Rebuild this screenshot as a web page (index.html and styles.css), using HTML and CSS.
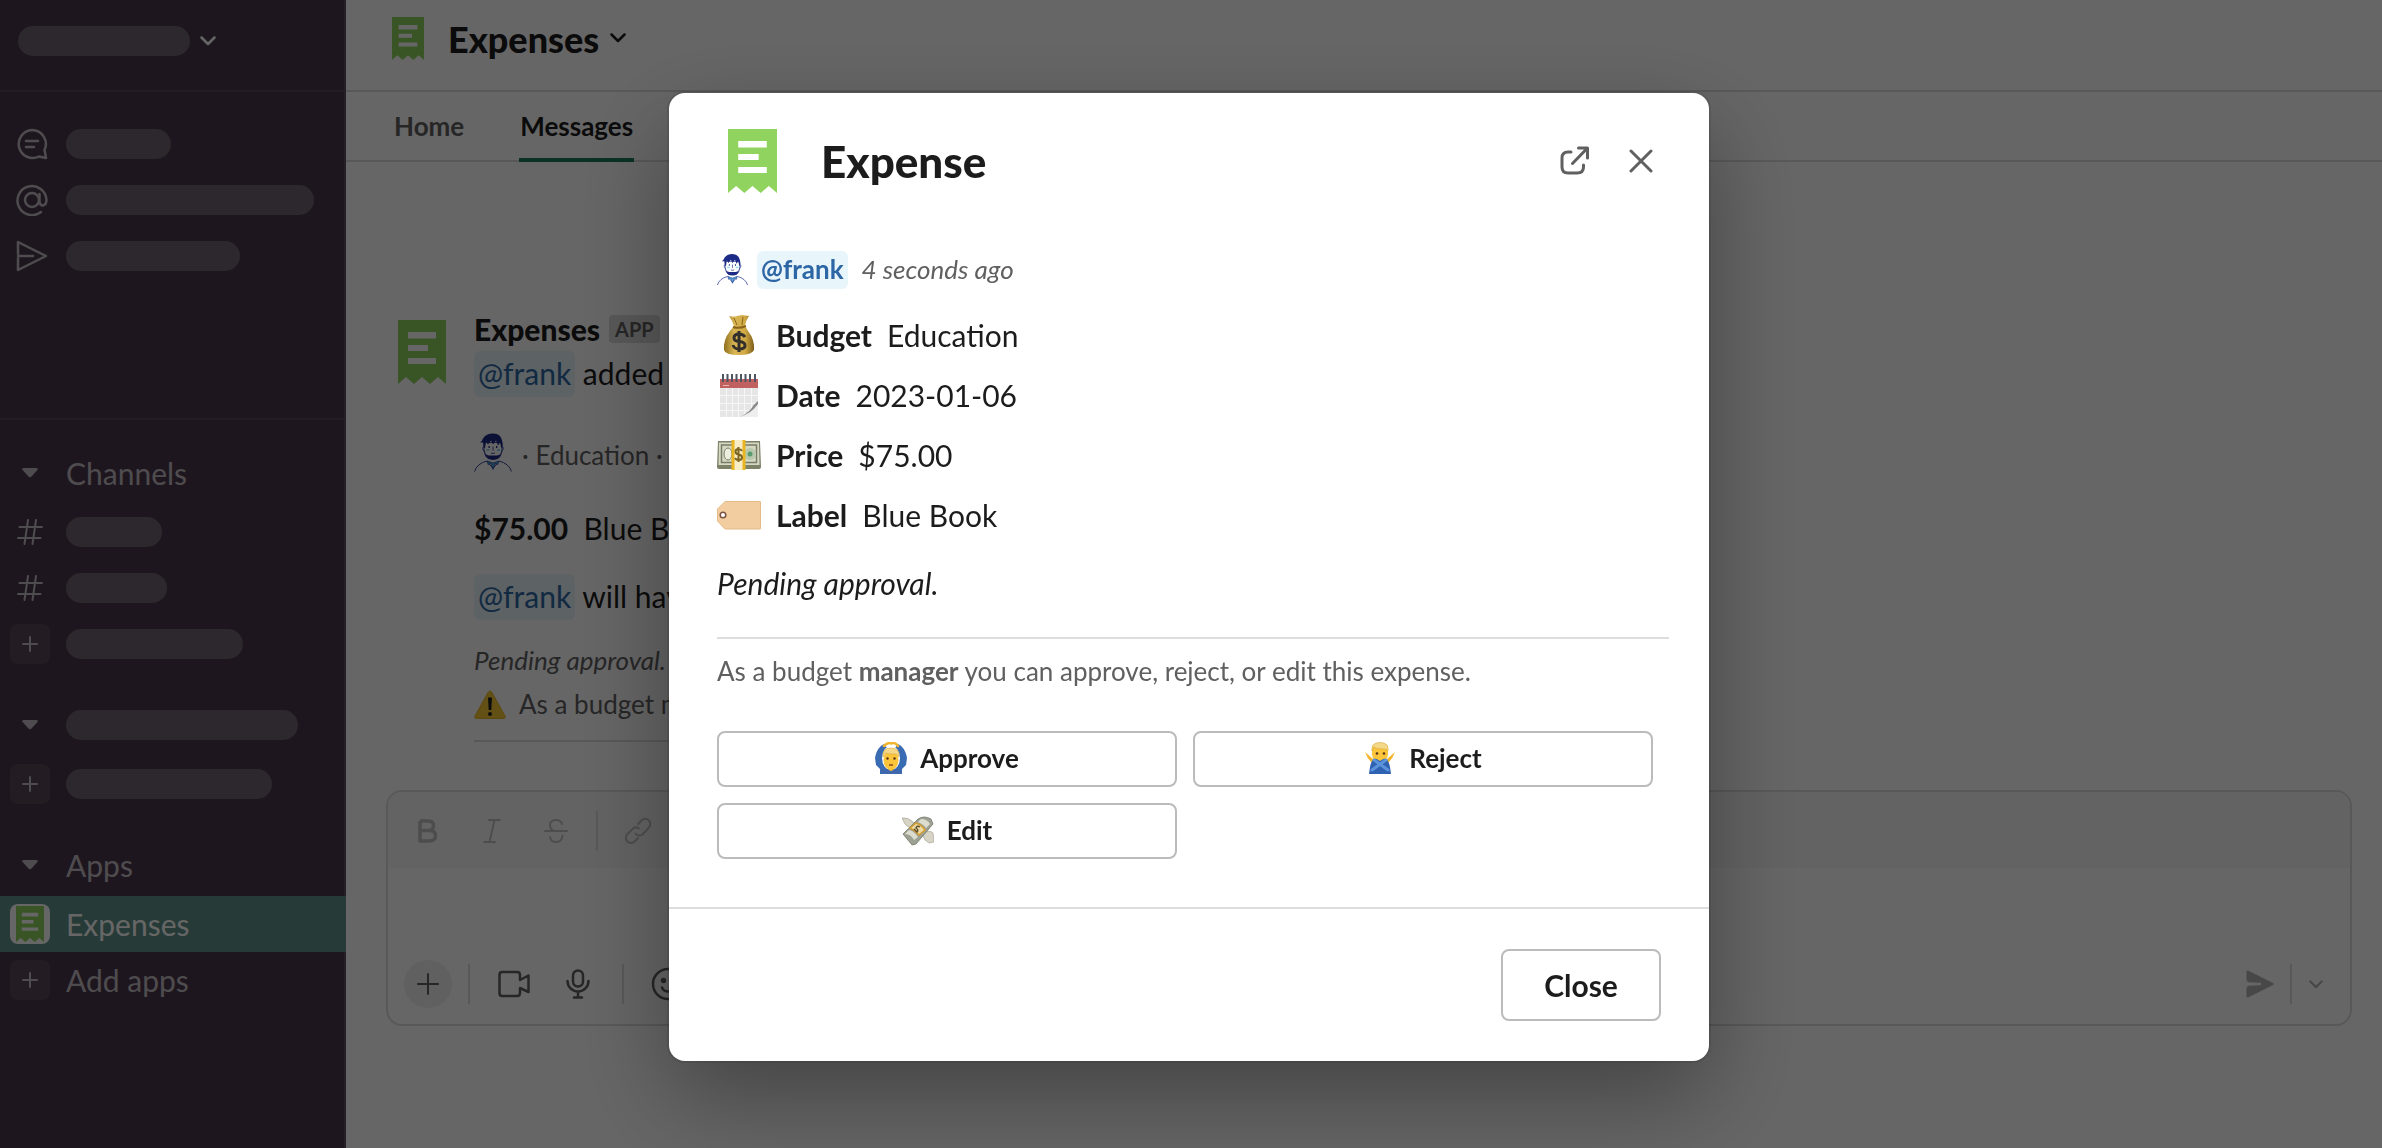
FILE: index.html
```html
<!DOCTYPE html>
<html lang="en">
<head>
<meta charset="utf-8">
<title>Expenses</title>
<link rel="stylesheet" href="styles.css">
</head>
<body>
<svg class="defs" aria-hidden="true">
  <symbol id="receipt" viewBox="0 0 48 64" preserveAspectRatio="none">
    <path fill="#90d45f" d="M0 0H48V64L40 57L32 64L24 57L16 64L8 57L0 64Z"/>
    <path fill="#fff" d="M10 12H38V18.5H10ZM10 25H30V31H10ZM10 38H38V44H10Z"/>
  </symbol>
  <symbol id="avatar" viewBox="0 0 38 38">
    <g fill="none" stroke="#3d4a9c" stroke-width="1">
      <path fill="#fff" d="M10 9Q9 22 14 25H24Q29 22 28 9Z"/>
      <path d="M10 13Q7 14 11 19M28 13Q31 14 27 19"/>
      <path fill="#fff" d="M.5 38Q3 30 13 27.5L19 35L25 27.5Q35 30 37.5 38"/>
    </g>
    <path fill="#1d2b86" d="M6 9Q8 8 9 5Q12 0 19 0Q29 0 28.500 13L27.500 15L26 9L24 12L22 7L19 11L17 7L14 11L12 8L11 15L10 14L9 9Z"/>
    <path fill="#1d2b86" d="M11 19.500Q13 22.500 16 22H22Q25 22.500 27 19.500Q26 26.500 19 26.500Q12 26.500 11 19.500Z"/>
    <path fill="#1d2b86" d="M14.500 12.500h1.300v2h-1.300zM22 12.500h1.300v2h-1.300z"/>
    <path fill="none" stroke="#1d2b86" stroke-width=".8" d="M19 13V17M17 19.500Q19 20.500 21 19.500"/>
    <path fill="#8fdcf5" d="M12.500 15.500h3v2h-3zM23 15.500h3v2h-3z"/>
    <path fill="#4aa8dd" stroke="#1d2b86" stroke-width=".6" d="M13.500 27.500L19 29.500L24.500 27.500L24 31L21 30L19 36L17 30L14 31Z"/>
  </symbol>
  <symbol id="chevron" viewBox="0 0 16 10">
    <path fill="none" stroke="currentColor" stroke-width="2.500" stroke-linecap="round" stroke-linejoin="round" d="M1.500 1.500L8 8L14.500 1.500"/>
  </symbol>
  <symbol id="caret" viewBox="0 0 16 10"><path fill="currentColor" d="M1.500 0H14.500Q17 .5 15 2.500L9.500 8.500Q8 10 6.500 8.500L1 2.500Q-1 .5 1.500 0Z"/></symbol>
  <symbol id="hash" viewBox="0 0 26 26"><path fill="none" stroke="currentColor" stroke-width="2" stroke-linecap="round" d="M11 1L7.500 25M19 1L15.500 25M2.500 8H25M1 19H23.500"/></symbol>
  <symbol id="plus" viewBox="0 0 16 16"><path fill="none" stroke="currentColor" stroke-width="2" stroke-linecap="round" d="M8 1V15M1 8H15"/></symbol>
</svg>

<div class="app">
  <nav class="sidebar">
    <div class="workspace">
      <span class="pill" style="width:172px"></span>
      <svg class="chev"><use href="#chevron"/></svg>
    </div>
    <div class="shortcuts">
      <div class="shortcut">
        <svg width="32" height="32" viewBox="0 0 32 32" fill="none" stroke="currentColor" stroke-width="2.500" stroke-linecap="round" stroke-linejoin="round"><path d="M16 2A14 14 0 1 0 23 28.500L30 30L28.500 22A14 14 0 0 0 16 2ZM10 13H22M10 19H18"/></svg>
        <span class="pill" style="width:105px"></span>
      </div>
      <div class="shortcut">
        <svg width="32" height="32" viewBox="0 0 32 32" fill="none" stroke="currentColor" stroke-width="2.500" stroke-linecap="round"><circle cx="16" cy="16" r="7"/><path d="M23.500 10V18Q24 21.500 27 21.500Q30.500 20.500 30.500 16A14.500 14.500 0 1 0 25 28"/></svg>
        <span class="pill" style="width:248px"></span>
      </div>
      <div class="shortcut">
        <svg width="32" height="32" viewBox="0 0 32 32" fill="none" stroke="currentColor" stroke-width="2.500" stroke-linecap="round" stroke-linejoin="round"><path d="M2 16H17M2 14V2L30 16L2 30V18"/></svg>
        <span class="pill" style="width:174px"></span>
      </div>
    </div>
    <div class="sections">
      <section>
        <h2 class="side-head"><svg class="caret"><use href="#caret"/></svg>Channels</h2>
        <div class="side-row"><svg class="hash"><use href="#hash"/></svg><span class="pill" style="width:96px"></span></div>
        <div class="side-row"><svg class="hash"><use href="#hash"/></svg><span class="pill" style="width:101px"></span></div>
        <div class="side-row"><span class="add"><svg width="16" height="16"><use href="#plus"/></svg></span><span class="pill" style="width:177px"></span></div>
      </section>
      <section>
        <div class="side-head"><svg class="caret"><use href="#caret"/></svg><span class="pill" style="width:232px"></span></div>
        <div class="side-row"><span class="add"><svg width="16" height="16"><use href="#plus"/></svg></span><span class="pill" style="width:206px"></span></div>
      </section>
      <section>
        <h2 class="side-head"><svg class="caret"><use href="#caret"/></svg>Apps</h2>
        <a class="side-row active" href="#expenses"><span class="add app-icon"><svg width="28" height="36"><use href="#receipt"/></svg></span>Expenses</a>
        <a class="side-row" href="#add"><span class="add"><svg width="16" height="16"><use href="#plus"/></svg></span>Add apps</a>
      </section>
    </div>
  </nav>

  <main class="main">
    <header class="channel">
      <svg width="32" height="43"><use href="#receipt"/></svg>
      <h1>Expenses</h1>
      <svg class="chev"><use href="#chevron"/></svg>
    </header>
    <div class="tabs">
      <a href="#home">Home</a>
      <a class="current" href="#messages">Messages</a>
    </div>
    <div class="messages">
      <article class="message">
        <div class="message-icon"><svg width="48" height="64"><use href="#receipt"/></svg></div>
        <div class="message-body">
          <div class="sender"><b>Expenses</b><span class="badge">APP</span></div>
          <p class="line first"><a class="mention" href="#frank">@frank</a> added</p>
          <p class="context meta"><svg width="38" height="39"><use href="#avatar"/></svg><span>· Education ·</span></p>
          <p class="line price"><b>$75.00</b>&nbsp; Blue Book</p>
          <p class="line decision"><a class="mention" href="#frank">@frank</a> will have</p>
          <p class="context pending"><i>Pending approval.</i></p>
          <p class="context warning">
            <svg width="32" height="29" viewBox="0 0 32 29"><path fill="#f7c832" stroke="#e9b528" stroke-width="1" stroke-linejoin="round" d="M16 1Q17 1 18 2.500L31 26Q32 28.500 29.500 28.500H2.500Q0 28.500 1 26L14 2.500Q15 1 16 1Z"/><path fill="#222" d="M14 7.500H18L17.300 20H14.700Z"/><circle cx="16" cy="24" r="2" fill="#222"/></svg>
            <span>As a budget manager</span>
          </p>
          <hr>
        </div>
      </article>
    </div>

    <form class="composer">
      <div class="toolbar">
        <button type="button" aria-label="Bold"><svg width="24" height="28" viewBox="0 0 24 28" fill="none" stroke="currentColor" stroke-width="3.500" stroke-linejoin="round"><path d="M4 4V24H13Q19.500 24 19.500 19Q19.500 13.500 13 13.500H4M4 4H12Q17.500 4 17.500 8.500Q17.500 13.500 12 13.500"/></svg></button>
        <button type="button" aria-label="Italic"><svg width="24" height="28" viewBox="0 0 24 28" fill="none" stroke="currentColor" stroke-width="2" stroke-linecap="round"><path d="M9 3H20M4 25H15M14.500 3L9.500 25"/></svg></button>
        <button type="button" aria-label="Strikethrough"><svg width="24" height="28" viewBox="0 0 24 28" fill="none" stroke="currentColor" stroke-width="2" stroke-linecap="round"><path d="M1 14H23M18 7Q17 3 12 3Q6 3 6 8.500Q6 12 10 14M6 20Q7 25 12 25Q18 25 18.500 18.500"/></svg></button>
        <span class="sep"></span>
        <button type="button" aria-label="Link"><svg width="28" height="28" viewBox="0 0 28 28" fill="none" stroke="currentColor" stroke-width="2" stroke-linecap="round"><path d="M14 7L17.500 3.500A5 5 0 0 1 25 10.500L19 17A5 5 0 0 1 11.500 16.500M15 11.500A5 5 0 0 0 9 11.500L3.500 17A5 5 0 0 0 10.500 24.500L14 21"/></svg></button>
      </div>
      <textarea aria-label="Message"></textarea>
      <div class="actions">
        <button type="button" class="round" aria-label="Attach"><svg width="24" height="24" viewBox="0 0 24 24" fill="none" stroke="currentColor" stroke-width="2" stroke-linecap="round"><path d="M12 2V22M2 12H22"/></svg></button>
        <span class="sep"></span>
        <div class="group">
          <button type="button" aria-label="Video"><svg width="32" height="28" viewBox="0 0 32 28" fill="none" stroke="currentColor" stroke-width="2.500" stroke-linejoin="round"><path d="M4 2H19Q22 2 22 5V10L30.500 5.500V22L22 18V23Q22 26 19 26H4Q1.500 26 1.500 23V5Q1.500 2 4 2Z"/></svg></button>
          <button type="button" aria-label="Audio"><svg width="24" height="30" viewBox="0 0 24 30" fill="none" stroke="currentColor" stroke-width="2.500" stroke-linecap="round"><rect x="7" y="1.500" width="10" height="16" rx="5"/><path d="M1.500 12A10.500 10.500 0 0 0 22.500 12M12 22.500V28M8 28.500H16"/></svg></button>
        </div>
        <span class="sep"></span>
        <div class="group">
          <button type="button" aria-label="Emoji"><svg width="34" height="34" viewBox="0 0 34 34" fill="none" stroke="currentColor" stroke-width="2.500" stroke-linecap="round"><circle cx="17" cy="17" r="15"/><path d="M11 20.500A6.500 6.500 0 0 0 23 20.500"/><circle cx="12.500" cy="13.500" r="1.500" fill="currentColor"/><circle cx="21.500" cy="13.500" r="1.500" fill="currentColor"/></svg></button>
        </div>
        <div class="send">
          <button type="submit" aria-label="Send"><svg width="28" height="28" viewBox="0 0 28 28"><path fill="currentColor" d="M.5 1.500Q.8 0 2.500 .8L27 13Q28.500 14 27 15L2.500 27.300Q.8 28 .5 26.500V18Q.8 16 3 15.800L14.500 15.200Q16 14 14.500 12.800L3 12.200Q.8 12 .5 10Z"/></svg></button>
          <span class="sep"></span>
          <button type="button" class="more" aria-label="Send options"><svg width="14" height="9"><use href="#chevron"/></svg></button>
        </div>
      </div>
    </form>
  </main>
</div>

<div class="overlay">
  <div class="modal" role="dialog" aria-modal="true" aria-labelledby="modal-title">
    <header class="modal-head">
      <svg width="49" height="64"><use href="#receipt"/></svg>
      <h2 id="modal-title">Expense</h2>
      <button type="button" class="icon-btn" aria-label="Open in new window"><svg width="30" height="30" viewBox="0 0 30 30" fill="none" stroke="currentColor" stroke-width="3" stroke-linecap="round" stroke-linejoin="round"><path d="M11 6H8Q2 6 2 12V21Q2 27 8 27H17Q23.500 27 23.500 21V19M12.500 17.500L27 2.500M18.500 2H27.500V12"/></svg></button>
      <button type="button" class="icon-btn" aria-label="Dismiss"><svg width="24" height="24" viewBox="0 0 24 24" fill="none" stroke="currentColor" stroke-width="3" stroke-linecap="round"><path d="M2 2L22 22M22 2L2 22"/></svg></button>
    </header>

    <div class="modal-body">
      <p class="author">
        <svg width="31" height="31"><use href="#avatar"/></svg>
        <a class="mention strong" href="#frank">@frank</a>
        <i>4 seconds ago</i>
      </p>
      <ul class="fields">
        <li>
          <svg width="44" height="44" viewBox="0 0 44 44"><defs><linearGradient id="bag"><stop offset="0" stop-color="#8f6d1c"/><stop offset=".35" stop-color="#d9b654"/><stop offset=".7" stop-color="#d0aa45"/><stop offset="1" stop-color="#7d5c16"/></linearGradient></defs><path fill="url(#bag)" d="M12 3Q15 4 20 3L25 2L32 3Q29 7 28 13L31 18Q38 27 37 37Q35 42 22 42Q8 42 7 37Q6 27 13 18L17 13Q15 7 12 3Z"/><path fill="none" stroke="#8a641b" stroke-width="2" d="M16 14Q22 16 29 13"/><path fill="none" stroke="#8a641b" d="M17 5L20 12M26 4L25 12"/><path fill="none" stroke="#34302a" stroke-width="3" d="M22 18V39M28 24Q26 21 22 21Q17 21 17 25Q17 28 22 28.500Q28 29 28 32.500Q28 36 22 36Q17 36 16 32"/></svg>
          <b>Budget</b>Education
        </li>
        <li>
          <svg width="44" height="44" viewBox="0 0 44 44"><path fill="#e6e6e7" d="M3 14H41V44H3Z"/><path fill="#c0605f" d="M3 6H41V15H3Z"/><path stroke="#f6f6f6" d="M3 22.500H41M3 30.500H41M3 37.500H41M9.500 15V44M15.500 15V44M21.500 15V44M27.500 15V44M34.500 15V44"/><path fill="#eee" d="M41 29Q35 39 22 44H41Z"/><path fill="#8a8a8a" d="M41 28Q36 32 34 36Q30 41 22 44Q34 41 41 31Z"/><path stroke="#4b5563" stroke-width="2" d="M6 1V9M10.500 1V9M15 1V9M19.500 1V9M24 1V9M28.500 1V9M33 1V9M38 1V9"/><path stroke="#e8b5b5" d="M6 12.500H12"/></svg>
          <b>Date</b>2023-01-06
        </li>
        <li>
          <svg width="44" height="44" viewBox="0 0 44 44"><path fill="#7d8168" d="M1 8H43L44 34Q44 36 42 36H2Q0 36 0 34Z"/><path fill="#d5d7c0" d="M2 9.500H42L42.500 32H1.500Z"/><path fill="none" stroke="#777c68" stroke-width="1.500" d="M4.500 12H39.500V29.500H4.500Z"/><ellipse cx="11" cy="21" rx="4" ry="6" fill="#eceddd" stroke="#777c68"/><circle cx="33" cy="21" r="6" fill="#b8c8ac"/><circle cx="33" cy="21" r="2.500" fill="#5b9a6e"/><path fill="#f7edc6" d="M15 7H28V37H15Z"/><path fill="#e9b521" d="M14.500 7H17.500V37H14.500ZM25.500 7H28.500V37H25.500Z"/><path fill="none" stroke="#7c6320" stroke-width="2" d="M21.500 14V29M25 18Q24 16 21.500 16Q18.500 16 18.500 18.500Q18.500 21 21.500 21.500Q25 22 25 24.500Q25 27 21.500 27Q19 27 18 25"/></svg>
          <b>Price</b>$75.00
        </li>
        <li>
          <svg width="44" height="44" viewBox="0 0 44 44"><path fill="#f1cda0" stroke="#e3bb87" d="M8 8.500H43Q43.500 8.500 43.500 9V35.500Q43.500 36 43 36H8L.5 28V16Z"/><circle cx="6" cy="22" r="2.800" fill="#fff" stroke="#7b5340" stroke-width="1.500"/></svg>
          <b>Label</b>Blue Book
        </li>
      </ul>
      <p class="status"><i>Pending approval.</i></p>
      <hr>
      <p class="note">As a budget <b>manager</b> you can approve, reject, or edit this expense.</p>
      <div class="choices">
        <button type="button">
          <svg width="32" height="32" viewBox="0 0 32 32"><path fill="#3a6cb4" d="M9 2Q2 5 0 16L1 23L5 27V32H27V27L31 23L32 16Q30 5 23 2L20 6H12Z"/><path fill="none" stroke="#f0b52d" stroke-width="2.500" stroke-linecap="round" d="M9 4Q13 0 16 1.500Q20 0 23 4"/><ellipse cx="16" cy="16" rx="9" ry="12" fill="#fff"/><path fill="#f5b52f" d="M13 25H19V30H13Z"/><path fill="#3f68ac" d="M6 27Q10 27 13 27Q16 31 19 27Q22 27 26 27V32H6Z"/><ellipse cx="16" cy="18" rx="7.500" ry="10" fill="#fbc53b"/><path fill="#f3d88a" stroke="#d9a738" stroke-width=".6" d="M8 15Q7 6 16 6Q25 6 24 15Q23 12 20 12Q12 12 10 11Q9 13 8 15Z"/><circle cx="12.500" cy="16.500" r="1.200" fill="#54331b"/><circle cx="19.500" cy="16.500" r="1.200" fill="#54331b"/><path stroke="#8a4a20" stroke-width="1.500" d="M14 23H18"/></svg>
          Approve
        </button>
        <button type="button">
          <svg width="32" height="32" viewBox="0 0 32 32"><path fill="#f4b62e" d="M1 10L9 17L13 19L10 22L7 20Q3 16 1 10ZM31 10L23 17L19 19L22 22L25 20Q29 16 31 10Z"/><path fill="#fbc53b" d="M8 6Q8 1 16 1Q24 1 24 6V13Q23 19 16 19Q9 19 8 13Z"/><path fill="#f3d88a" stroke="#d9a738" stroke-width=".6" d="M8 9Q7 .5 16 .5Q25 .5 24 9Q23 7 20 7Q12 7 10 5Q9 7 8 9Z"/><path fill="#2f62b2" d="M5 32L6 25Q7 19 10 17Q12 16 16 19Q20 16 22 17Q25 19 26 25L27 32Z"/><path fill="none" stroke="#5b93dc" stroke-width="3" stroke-linecap="round" d="M10 18L24 28M22 18L8 28"/><circle cx="13" cy="11.500" r="1.300" fill="#54331b"/><circle cx="20" cy="11.500" r="1.300" fill="#54331b"/></svg>
          Reject
        </button>
        <button type="button">
          <svg width="32" height="32" viewBox="0 0 32 32"><path fill="#d7d3c5" stroke="#a9a597" stroke-width=".7" d="M0 4Q6 3 11 8L14 11L9 14Q4 12 3 10ZM20 20Q27 15 31 19L32 28L27 29L23 26Z"/><path fill="#9da193" stroke="#757a6c" stroke-width=".8" d="M1 20L16 5Q22 1 29 5L31 10L14 30L10 31Z"/><path fill="#dcddcf" d="M3 20Q9 20 12 26L16 23Q12 17 7 16ZM16 8Q22 11 24 14L28 10Q25 5 19 5Z"/><path fill="#ecd9a2" stroke="#d39d30" stroke-width="1.500" d="M8 14L14 9Q20 11 23 16L17 21Q13 16 8 14Z"/><path fill="none" stroke="#5f5130" stroke-width="1.500" d="M18 13Q15 11 14 14Q17 16 15 18L12 15"/></svg>
          Edit
        </button>
      </div>
    </div>

    <footer class="modal-foot"><button type="button">Close</button></footer>
  </div>
</div>
</body>
</html>
```
FILE: styles.css
```css
*, *::before, *::after { box-sizing: border-box; }

body {
  margin: 0;
  background: #fff;
  color: #1d1c1d;
  font: 30px/44px Lato, "Liberation Sans", sans-serif;
}

h1, h2, p, ul { margin: 0; padding: 0; }
svg { display: block; flex: none; }
a { color: inherit; text-decoration: none; }
button { margin: 0; padding: 0; border: 0; background: none; color: inherit; font: inherit; cursor: pointer; }
hr { height: 2px; margin: 0; border: 0; background: #ddd; }
.defs { position: absolute; width: 0; height: 0; }
.chev { width: 16px; height: 10px; }

.app { display: flex; min-height: 100vh; }

/* Sidebar */
.sidebar {
  flex: none;
  width: 346px;
  border-right: 2px solid #5f4d5d;
  background: #4d394b;
  color: #c3bec3;
}
.pill { height: 30px; border-radius: 15px; background: #706570; }

.workspace {
  display: flex;
  align-items: center;
  gap: 10px;
  height: 92px;
  padding: 0 18px 8px;
  border-bottom: 2px solid #5a4758;
  color: #fff;
}
.shortcuts {
  height: 328px;
  padding-top: 24px;
  border-bottom: 2px solid #5a4758;
}
.shortcut { display: flex; align-items: center; gap: 18px; height: 56px; padding-left: 16px; }

.sections { display: grid; gap: 22px; padding-top: 22px; }
.side-head, .side-row { display: grid; grid-template-columns: 40px 1fr; column-gap: 16px; align-items: center; padding-left: 10px; font-size: 30px; font-weight: 400; }
.side-head { height: 62px; }
.side-row { height: 56px; }
.side-row.active { margin-right: -2px; background: #5f9289; color: #fff; }
.caret { width: 16px; height: 10px; justify-self: center; }
.hash { width: 26px; height: 26px; justify-self: center; }
.add { display: grid; place-items: center; height: 40px; border-radius: 8px; background: #5a4858; }
.app-icon { background: #fff; }

/* Main column */
.main { display: flex; flex: 1; flex-direction: column; min-width: 0; }

.channel {
  display: flex;
  align-items: center;
  height: 92px;
  padding: 0 46px 14px;
  border-bottom: 2px solid #ddd;
}
.channel h1 { margin: 2px 11px 0 24px; font-size: 36px; font-weight: 900; }

.tabs {
  display: flex;
  gap: 54px;
  height: 70px;
  padding-left: 47px;
  border-bottom: 2px solid #ddd;
  color: #616061;
  font-size: 26px;
  font-weight: 700;
}
.tabs a { height: 70px; padding: 12px 1px 0; }
.tabs .current { border-bottom: 4px solid #1c7a60; color: #1d1c1d; }

.messages { flex: 1; padding: 153px 40px 0; }
.message { display: flex; gap: 16px; max-width: 1288px; }
.message-icon { display: grid; flex: none; place-items: center; width: 72px; height: 74px; }
.message-body { flex: 1; white-space: nowrap; }
.sender { display: flex; align-items: center; gap: 9px; height: 28px; line-height: 28px; }
.sender b { font-weight: 900; }
.badge { height: 28px; padding: 0 6px; border-radius: 4px; background: #dcdcdc; color: #616061; font-size: 20px; font-weight: 700; line-height: 28px; }

.line { height: 44px; }
.line.first { margin-top: 8px; }
.line.price { margin-top: 31px; }
.line.decision { margin-top: 24px; }

.mention { padding: 4px 4px 6px; border-radius: 6px; background: #e8f5fa; color: #2d66a5; }
.mention.strong { padding: 3px 4px 4px; font-weight: 700; }

.context { display: flex; align-items: center; height: 40px; color: #616061; font-size: 26px; line-height: 40px; }
.context.meta { gap: 10px; margin-top: 40px; }
.context.meta svg { margin-bottom: 5px; }
.context.pending { margin-top: 22px; }
.context.warning { gap: 13px; margin: 4px 0 16px; }

.composer {
  margin: 0 30px 122px 40px;
  border: 2px solid #ddd;
  border-radius: 16px;
  overflow: hidden;
}
.composer button { display: grid; place-items: center; width: 48px; height: 48px; }
.toolbar { display: flex; align-items: center; gap: 16px; height: 76px; padding: 2px 16px 0; background: #f8f8f8; color: #c0c0c0; }
.sep { flex: none; width: 2px; height: 40px; background: #ddd; }
.composer textarea { display: block; width: 100%; height: 92px; padding: 12px 24px; border: 0; background: none; font: inherit; resize: none; outline: 0; }
.actions { display: flex; align-items: center; gap: 16px; padding: 0 16px 16px; color: #616061; }
.actions .round { border-radius: 50%; background: #f0f0f0; }
.group { display: flex; gap: 16px; padding: 0 4px; }
.send { display: flex; align-items: center; gap: 6px; margin-left: auto; color: #b4b4b4; }
.composer .more { width: 36px; }

/* Dialog */
.overlay {
  position: fixed;
  inset: 0;
  display: flex;
  align-items: center;
  justify-content: center;
  padding: 6px 4px 0 0;
  background: rgba(0, 0, 0, .6);
}
.modal {
  width: 1040px;
  max-width: 100%;
  border-radius: 16px;
  background: #fff;
  box-shadow: 0 0 0 2px rgba(29, 28, 29, .13), 0 36px 96px rgba(0, 0, 0, .35);
}
.modal-head { display: flex; align-items: center; padding: 36px 44px 0 59px; }
.modal-head h2 { flex: 1; margin-left: 44px; font-size: 44px; font-weight: 900; line-height: 64px; }
.icon-btn { display: grid; place-items: center; width: 48px; height: 48px; margin-left: 18px; color: #616061; }

.modal-body { padding: 58px 40px 48px 48px; }
.author { display: flex; align-items: center; height: 37px; color: #616061; font-size: 26px; line-height: 31px; }
.author .mention { margin: 0 14px 0 9px; }
.fields { margin-top: 17px; list-style: none; }
.fields li { display: flex; align-items: center; height: 60px; }
.fields svg { margin-right: 15px; }
.fields b { margin-right: 15px; }
.status { margin: 8px 0 24px; line-height: 60px; }
.note { margin: 12px 0 40px; color: #616061; font-size: 26px; line-height: 40px; }

.choices { display: grid; grid-template-columns: 1fr 1fr; gap: 16px; padding-right: 16px; }
.choices button, .modal-foot button { border: 2px solid #bbb; border-radius: 8px; background: #fff; font-weight: 700; }
.choices button { display: flex; align-items: center; justify-content: center; gap: 13px; height: 56px; padding-bottom: 2px; font-size: 26px; }

.modal-foot { display: flex; justify-content: flex-end; padding: 40px 48px; border-top: 2px solid #ddd; }
.modal-foot button { width: 160px; height: 72px; }
```
